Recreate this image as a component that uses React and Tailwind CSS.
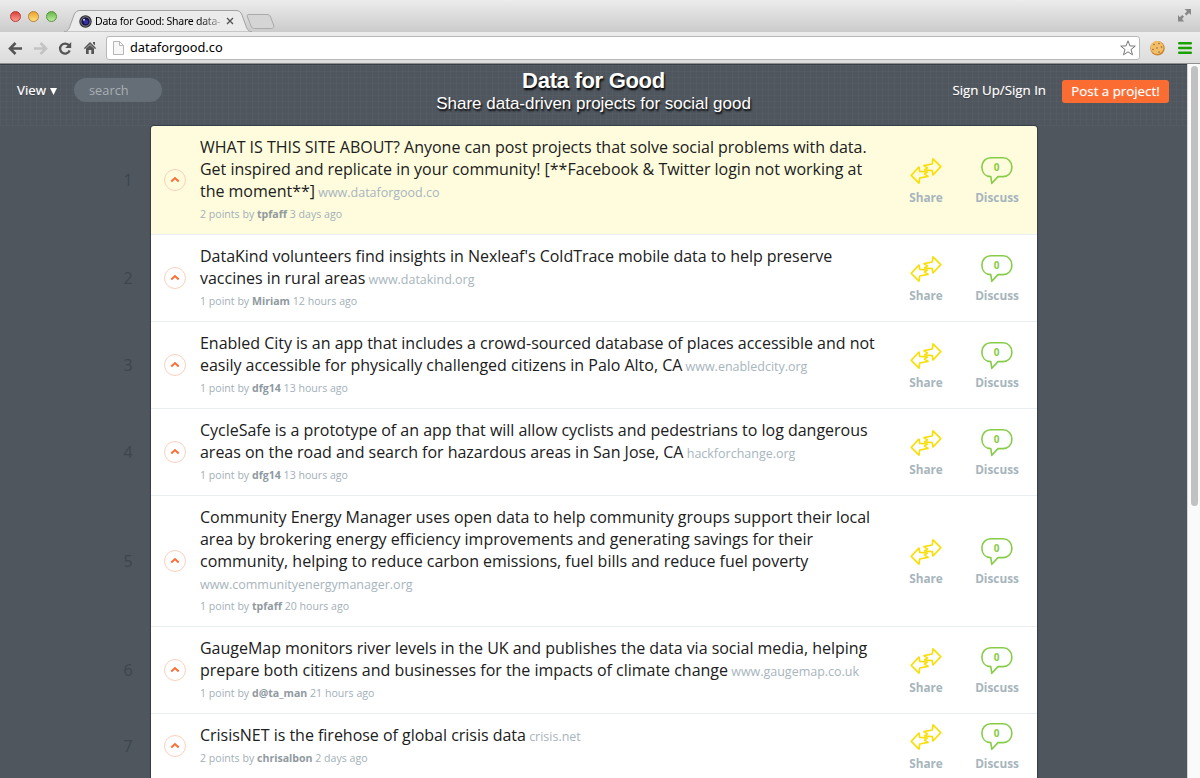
import React from "react";

const projects = [
  {
    lines: [
      "WHAT IS THIS SITE ABOUT? Anyone can post projects that solve social problems with data.",
      "Get inspired and replicate in your community! [**Facebook & Twitter login not working at",
      "the moment**]",
    ],
    site: "www.dataforgood.co", points: "2 points", author: "tpfaff", age: "3 days ago", featured: true,
  },
  {
    lines: [
      "DataKind volunteers find insights in Nexleaf's ColdTrace mobile data to help preserve",
      "vaccines in rural areas",
    ],
    site: "www.datakind.org", points: "1 point", author: "Miriam", age: "12 hours ago",
  },
  {
    lines: [
      "Enabled City is an app that includes a crowd-sourced database of places accessible and not",
      "easily accessible for physically challenged citizens in Palo Alto, CA",
    ],
    site: "www.enabledcity.org", points: "1 point", author: "dfg14", age: "13 hours ago",
  },
  {
    lines: [
      "CycleSafe is a prototype of an app that will allow cyclists and pedestrians to log dangerous",
      "areas on the road and search for hazardous areas in San Jose, CA",
    ],
    site: "hackforchange.org", points: "1 point", author: "dfg14", age: "13 hours ago",
  },
  {
    lines: [
      "Community Energy Manager uses open data to help community groups support their local",
      "area by brokering energy efficiency improvements and generating savings for their",
      "community, helping to reduce carbon emissions, fuel bills and reduce fuel poverty",
      "",
    ],
    site: "www.communityenergymanager.org", points: "1 point", author: "tpfaff", age: "20 hours ago",
  },
  {
    lines: [
      "GaugeMap monitors river levels in the UK and publishes the data via social media, helping",
      "prepare both citizens and businesses for the impacts of climate change",
    ],
    site: "www.gaugemap.co.uk", points: "1 point", author: "d@ta_man", age: "21 hours ago",
  },
  {
    lines: ["CrisisNET is the firehose of global crisis data"],
    site: "crisis.net", points: "2 points", author: "chrisalbon", age: "2 days ago",
  },
];

function ShareIcon() {
  return (
    <svg width="34" height="28" viewBox="-17 -14 34 28" fill="none" stroke="#f8df0c" strokeWidth="1.7" strokeLinejoin="round">
      <path d="M14.800-4.300 7-12.200 6.300-7-2-5.300 1.500-3.100-1.400-1 6.300-.4 7 4Z" />
      <path d="M-14.800 4.300-7 12.200-6.300 7 2 5.300-1.500 3.100 1.400 1-6.300.4-7-4Z" />
    </svg>
  );
}

function DiscussIcon() {
  return (
    <svg width="34" height="30" viewBox="0 0 34 30" fill="none" stroke="#86cc46" strokeWidth="1.6" strokeLinejoin="round">
      <path d="M11 1.800h12c5.200 0 8.900 4 8.900 9.400s-3.700 9.400-8.900 9.400h-5L11.800 27.300 10.800 20.600C5.500 20.400 1.900 16.800 1.900 11.200S5.600 1.800 11 1.800Z" />
    </svg>
  );
}

function Project({ project, rank }) {
  return (
    <article className={`flex shrink-0 border-b border-[#e9eef0] ${project.featured ? "rounded-t-[3px] bg-[#fefcdd]" : "bg-white"}`}>
      <div className="-ml-[33px] flex w-[20px] shrink-0 items-center justify-center text-[16px] text-[#3e454d]">{rank}</div>
      <div className="ml-[26px] flex w-[22px] shrink-0 items-center pb-px">
        <span className="flex h-[22px] w-[22px] items-center justify-center rounded-full border border-[#fbd0bd]">
          <svg width="10" height="7" viewBox="0 0 10 7" fill="none" stroke="#f96e38" strokeWidth="2"><path d="m1.300 5.400L5 2l3.700 3.400" /></svg>
        </span>
      </div>
      <div className="ml-[14px] flex-1 whitespace-nowrap pb-[11px] pt-[10px]">
        {project.lines.map((line, i) => (
          <div key={i} className="h-[22px] text-[16px] leading-[22px] tracking-[-0.02px] text-[#202020]">
            {line}
            {i === project.lines.length - 1 && (
              <span className="text-[12.5px] tracking-[-0.01px] text-[#a7b5bd]">{line ? " " : ""}{project.site}</span>
            )}
          </div>
        ))}
        <div className="h-[21px] text-[10.6px] leading-[25px] text-[#a2b0b8]">
          {project.points} by <b className="font-bold text-[#8f9a9f]">{project.author}</b> {project.age}
        </div>
      </div>
      <div className="flex w-[142px] shrink-0 items-center text-[11.8px] font-bold leading-[16px] text-[#a7b5bd]">
        <div className="flex w-[62px] flex-col items-center">
          <div className="h-[34px] pt-[2px]"><ShareIcon /></div>
          <span>Share</span>
        </div>
        <div className="ml-[9px] flex w-[62px] flex-col items-center">
          <div className="grid h-[34px]">
            <div className="col-start-1 row-start-1 pt-px"><DiscussIcon /></div>
            <span className="col-start-1 row-start-1 pr-px pt-[4px] text-center text-[10px] text-[#86cc46]">0</span>
          </div>
          <span>Discuss</span>
        </div>
      </div>
    </article>
  );
}

function TitleBar() {
  return (
    <div className="flex h-[32px] shrink-0 bg-linear-to-b from-[#ececec] to-[#cbcbcb]">
      <div className="flex w-[64px] items-start gap-[7px] pl-[10px] pt-[11px]">
        <i className="h-[11px] w-[11px] rounded-full border border-[#b83c37] bg-linear-to-b from-[#d93d3b] to-[#ff9a90]" />
        <i className="h-[11px] w-[11px] rounded-full border border-[#b9812e] bg-linear-to-b from-[#e9a12e] to-[#ffe07c]" />
        <i className="h-[11px] w-[11px] rounded-full border border-[#56933b] bg-linear-to-b from-[#68b648] to-[#b9ed99]" />
      </div>
      <div className="grid h-[32px] w-[212px]">
        <svg className="col-start-1 row-start-1" width="212" height="32" viewBox="0 0 212 32">
          <path d="M0 32c4-1 5-3 6-6l4-11c1-3 3-4.500 6-4.500h156c3 0 5 1.500 6 4.500l4 11c1 3 2 5 6 6Z" fill="#ebebeb" stroke="#a2a2a2" />
          <path d="M184 14.500h19c2 0 3 .8 3.600 2.500l3 8c.6 2-.2 3.500-2 3.500h-17c-2 0-3-.8-3.600-2.500l-3.500-9c-.4-1.500 0-2.500.5-2.500Z" fill="#d5d5d5" stroke="#aaa" />
        </svg>
        <div className="col-start-1 row-start-1 flex pl-[15px] pt-[15px]">
          <svg width="13" height="13" viewBox="0 0 13 13">
            <circle cx="6.500" cy="6.500" r="6.200" fill="#333" /><circle cx="6.500" cy="6.500" r="4.600" fill="#17154a" stroke="#a6a6ad" strokeWidth=".7" />
            <circle cx="7" cy="7" r="2.300" fill="#3730a8" /><circle cx="5" cy="4.800" r="1.100" fill="#c0c4ef" />
          </svg>
          <span className="-mt-[2px] ml-[3px] h-[17px] w-[128px] whitespace-nowrap bg-linear-to-r from-black from-78% to-[#d5d5d5] bg-clip-text font-['Noto_Sans',sans-serif] text-[10.500px] leading-[17px] tracking-[-0.25px] text-transparent">Data for Good: Share data-</span>
          <svg className="ml-[3px] mt-[2px]" width="8" height="8" viewBox="0 0 8 8" stroke="#555" strokeWidth="1.400"><path d="m1 1 6 6M7 1 1 7" /></svg>
        </div>
      </div>
      <svg className="ml-auto mr-[8px] mt-[9px]" width="14" height="13" viewBox="0 0 14 13" fill="#888">
        <path d="M6.500 0H13v6l-2-2-2.500 2.500L6.700 4.800 9 2.200ZM0 6l2 2.200 2.200-2.200L6 7.800 4 10l2.200 2.500H0Z" />
      </svg>
    </div>
  );
}

function Toolbar() {
  return (
    <div className="flex h-[32px] shrink-0 items-center border-b border-[#8f8f8f] bg-linear-to-b from-[#ededed] to-[#dcdcdc]">
      <svg width="106" height="30" viewBox="0 0 106 30" fill="none">
        <path d="M22 15.500H10.500M15.500 10l-5.500 5.500 5.500 5.500" stroke="#555" strokeWidth="2.600" />
        <path d="M34 15.500h11.500M40.500 10l5.500 5.500-5.500 5.500" stroke="#c3c3c3" strokeWidth="2.600" />
        <path d="M69.200 12.700a5 5 0 1 0 .5 4.800" stroke="#555" strokeWidth="2.300" /><path d="M71.200 9v6h-6Z" fill="#555" />
        <path d="m90 9 6.200 6.200-1.200.8-5-4.700-5 4.700-1.200-.8Zm3 0h2v3.500l-2-2ZM86 15.500l4-3.500 4 3.500V21h-2.700v-4h-2.600v4H86Z" fill="#555" />
      </svg>
      <div className="flex h-[24px] flex-1 items-center rounded-[3px] border border-[#b8b8b8] bg-white">
        <svg className="ml-[6px]" width="11" height="14" viewBox="0 0 11 14"><path d="M.5.5h6l4 4v9H.5ZM6.500.5v4h4" fill="#f7f7f7" stroke="#b6b6b6" /></svg>
        <span className="ml-[6px] pt-px font-['Noto_Sans',sans-serif] text-[12.800px] text-black">dataforgood.co</span>
        <svg className="ml-auto mr-[3px]" width="16" height="16" viewBox="0 0 16 16" fill="none" stroke="#777"><path d="m8 .8 1.900 5.100 5.400.2-4.300 3.400 1.500 5.300L8 11.800l-4.500 3 1.500-5.300L.7 6.100l5.400-.2Z" /></svg>
      </div>
      <svg className="ml-[9px]" width="17" height="16" viewBox="0 0 17 16">
        <circle cx="8.500" cy="8.300" r="7.200" fill="#c98735" /><circle cx="8" cy="7.500" r="6.500" fill="#f2bf68" />
        <g fill="#96612a"><circle cx="5" cy="4.500" r=".8" /><circle cx="10" cy="3.500" r=".8" /><circle cx="12.500" cy="7" r=".8" /><circle cx="8" cy="8" r=".8" /><circle cx="4" cy="9.500" r=".8" /><circle cx="10" cy="12" r=".8" /></g>
      </svg>
      <svg className="ml-[12px] mr-[8px]" width="14" height="12" viewBox="0 0 14 12" fill="#18a303"><rect width="14" height="2.500" rx="1" /><rect y="4.700" width="14" height="2.500" rx="1" /><rect y="9.400" width="14" height="2.500" rx="1" /></svg>
    </div>
  );
}

function SiteHeader() {
  return (
    <header className="grid h-[62px] shrink-0 border-t border-[#363e48] bg-[linear-gradient(#ffffff06_1px,transparent_1px),linear-gradient(90deg,#ffffff06_1px,transparent_1px)] bg-size-[6px_6px] text-white">
      <div className="col-start-1 row-start-1 flex items-start pl-[17px] pr-[18px] pt-[13px] text-[13.300px]">
        <span className="flex h-[24px] w-[57px] items-center whitespace-nowrap pt-px [text-shadow:0_0_1px_#fff8,0_1px_1px_#0006]">View
          <svg className="ml-[4px] mt-px" width="7" height="7" viewBox="0 0 7 7" fill="white"><path d="M0 0h7L3.500 7Z" /></svg>
        </span>
        <span className="flex h-[24px] w-[88px] items-center rounded-full bg-[#656d76] pl-[15px] pt-px text-[12.800px] text-[#a9b0b5]">search</span>
        <span className="ml-auto flex h-[24px] items-center pt-[2px] [text-shadow:0_0_1px_#fff8,0_1px_1px_#0006]">Sign Up/Sign In</span>
        <button className="ml-[16px] mt-[2px] h-[23px] w-[107px] whitespace-nowrap rounded-[3px] bg-[#fb6c32] [text-shadow:0_0_1px_#fff8]">Post a project!</button>
      </div>
      <div className="col-start-1 row-start-1 flex flex-col items-center font-['Liberation_Sans',Arial,sans-serif] [text-shadow:1px_2px_2px_#000]">
        <h1 className="mt-[3px] text-[22px] font-bold leading-[26px] tracking-[-0.3px]">Data for Good</h1>
        <p className="text-[17px] leading-[20px]">Share data-driven projects for social good</p>
      </div>
    </header>
  );
}

export default function App() {
  return (
    <div className="flex h-[778px] w-[1200px] flex-col overflow-hidden bg-[#4f565e] font-['Open_Sans',sans-serif]">
      <TitleBar />
      <Toolbar />
      <div className="flex min-h-0 flex-1">
        <div className="flex min-w-0 flex-1 flex-col">
          <SiteHeader />
          <main className="ml-[151px] flex w-[886px] flex-col rounded-t-[3px] shadow-[0_0_1px_1px_#353d47]">
            {projects.map((project, i) => <Project key={project.site} project={project} rank={i + 1} />)}
          </main>
        </div>
        <div className="w-[13px] border-l border-[#d4d4d4] bg-[#fafafa] pl-[3px] pt-[2px]">
          <div className="h-[440px] w-[7px] rounded-full bg-[#c1c1c1]" />
        </div>
      </div>
    </div>
  );
}
